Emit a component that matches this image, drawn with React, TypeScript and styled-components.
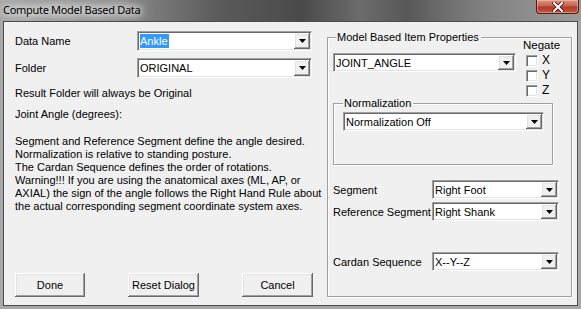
import React from "react";
import styled, { createGlobalStyle } from "styled-components";

const GlobalStyle = createGlobalStyle`
	html, body {
		margin: 0;
		padding: 0;
		background: #ffffff;
	}
	body {
		font-family: "Liberation Sans", Arial, sans-serif;
		font-size: 11px;
		color: #000;
	}
	* {
		box-sizing: border-box;
	}
`;

const raised = `
	background: #f0f0f0;
	box-shadow: inset -1px -1px 0 #696969, inset 1px 1px 0 #ffffff,
		inset -2px -2px 0 #a0a0a0, inset 2px 2px 0 #e3e3e3;
`;

const Window = styled.div`
	width: 581px;
	height: 309px;
	display: flex;
	flex-direction: column;
	background: linear-gradient(90deg, #a4a4a4 0%, #8c8c8c 20%, #5a5a5a 38%, #4a4a4a 52%, #6c6c6c 62%, #585858 70%, #7e7e7e 82%, #9c9c9c 100%);
`;

const TitleBar = styled.div`
	height: 21px;
	display: flex;
	align-items: flex-start;
	justify-content: space-between;
	padding: 0 3px 0 3px;
`;

const TitleText = styled.span`
	font-family: "Noto Sans", "Open Sans", sans-serif;
	font-size: 11px;
	letter-spacing: -0.3px;
	line-height: 19px;
	color: #000;
	text-shadow: 0 0 6px #fff, 0 0 10px #fff, 0 0 14px #fff, 0 0 18px #ddd;
`;

const CloseButton = styled.div`
	width: 43px;
	height: 14px;
	margin-right: -1px;
	border: 1px solid #4a1e18;
	border-top: none;
	border-radius: 0 0 4px 4px;
	background: linear-gradient(180deg, #dd9484 0%, #c9604e 45%, #b23a26 55%, #c4553f 100%);
	box-shadow: inset 0 0 0 1px rgba(255, 210, 200, 0.45);
	display: flex;
	align-items: center;
	justify-content: center;
`;

const Frame = styled.div`
	flex: 1;
	display: flex;
	padding: 0 3px 3px 3px;
	background: #a8a8a8;
`;

const Client = styled.div`
	flex: 1;
	display: flex;
	gap: 14px;
	border: 1px solid #4c4c4c;
	background: #f0f0f0;
	padding: 9px 5px 8px 11px;
`;

const LeftColumn = styled.div`
	width: 298px;
	display: flex;
	flex-direction: column;
`;

const FieldRow = styled.div<{ $gap?: number; $label?: number }>`
	display: flex;
	align-items: center;
	margin-top: ${p => p.$gap ?? 0}px;

	& > span:first-child {
		width: ${p => p.$label ?? 122}px;
		flex: none;
		white-space: nowrap;
	}
`;

const Note = styled.div<{ $gap: number }>`
	margin-top: ${p => p.$gap}px;
	line-height: 13px;
	white-space: nowrap;
`;

const Combo = styled.div<{ $w: number; $h?: number; $gap?: number }>`
	width: ${p => p.$w}px;
	height: ${p => p.$h ?? 19}px;
	margin-top: ${p => p.$gap ?? 0}px;
	flex: none;
	display: flex;
	padding: 1px;
	background: #fff;
	border: 1px solid;
	border-color: #a0a0a0 #ffffff #ffffff #a0a0a0;
	box-shadow: inset 1px 1px 0 #696969, inset -1px -1px 0 #e3e3e3;
`;

const ComboText = styled.div`
	flex: 1;
	display: flex;
	align-items: center;
	padding-left: 1px;
	white-space: nowrap;
	overflow: hidden;
`;

const Selected = styled.span`
	background: #3399ff;
	color: #fff;
	line-height: 14px;
	padding: 0 1px 0 0;
`;

const ArrowButton = styled.div`
	width: 16px;
	flex: none;
	display: flex;
	align-items: center;
	justify-content: center;
	${raised}
`;

const ButtonRow = styled.div`
	margin-top: auto;
	display: flex;
	justify-content: space-between;
`;

const PushButton = styled.button<{ $w: number }>`
	width: ${p => p.$w}px;
	height: 24px;
	border: none;
	padding: 0;
	font: inherit;
	color: #000;
	${raised}
`;

const GroupBox = styled.div<{ $w?: number; $h?: number; $gap: number; $pad: number }>`
	${p => (p.$w ? `width: ${p.$w}px;` : "flex: 1;")}
	${p => (p.$h ? `height: ${p.$h}px;` : "")}
	margin-top: ${p => p.$gap}px;
	border: 1px solid #a0a0a0;
	box-shadow: inset 1px 1px 0 #fff, 1px 1px 0 #fff;
	padding: 0 ${p => p.$pad}px;
	display: flex;
	flex-direction: column;
`;

const Caption = styled.div<{ $indent: number }>`
	width: fit-content;
	margin: -7px 0 0 ${p => p.$indent}px;
	padding: 0 2px 0 1px;
	line-height: 13px;
	background: #f0f0f0;
	white-space: nowrap;
`;

const TopRow = styled.div`
	display: flex;
	align-items: flex-start;
`;

const LeftStack = styled.div`
	display: flex;
	flex-direction: column;
`;

const NegateStack = styled.div`
	margin-left: 7px;
	padding-top: 1px;
	display: flex;
	flex-direction: column;
	gap: 2px;
	line-height: 13px;
	font-size: 11.5px;
`;

const CheckRow = styled.label`
	display: flex;
	align-items: center;
	height: 13px;
	padding-left: 3px;
	gap: 4px;
	font-size: 12px;
`;

const CheckBox = styled.span`
	width: 12px;
	height: 12px;
	background: #fff;
	border: 1px solid;
	border-color: #a0a0a0 #ffffff #ffffff #a0a0a0;
	box-shadow: inset 1px 1px 0 #696969, inset -1px -1px 0 #e3e3e3;
`;

const DownArrow = () => (
	<svg width="7" height="4" viewBox="0 0 7 4">
		<polygon points="0,0 7,0 3.5,4" fill="#000" />
	</svg>
);

const ComboBox: React.FC<{ w: number; h?: number; gap?: number; children: React.ReactNode }> = ({ w, h, gap, children }) => (
	<Combo $w={w} $h={h} $gap={gap}>
		<ComboText>{children}</ComboText>
		<ArrowButton>
			<DownArrow />
		</ArrowButton>
	</Combo>
);

const App: React.FC = () => {
	return (
		<>
			<GlobalStyle />
			<Window>
				<TitleBar>
					<TitleText>Compute Model Based Data</TitleText>
					<CloseButton>
						<svg width="12" height="10" viewBox="0 0 12 10">
							<path d="M2 1 L10 9 M10 1 L2 9" stroke="#3a1410" strokeWidth="3.6" strokeLinecap="square" />
							<path d="M2 1 L10 9 M10 1 L2 9" stroke="#fff" strokeWidth="2" strokeLinecap="square" />
						</svg>
					</CloseButton>
				</TitleBar>
				<Frame>
					<Client>
						<LeftColumn>
							<FieldRow>
								<span>Data Name</span>
								<ComboBox w={175} h={20}>
									<Selected>Ankle</Selected>
								</ComboBox>
							</FieldRow>
							<FieldRow $gap={7}>
								<span>Folder</span>
								<ComboBox w={175} h={20}>ORIGINAL</ComboBox>
							</FieldRow>
							<Note $gap={9}>Result Folder will always be Original</Note>
							<Note $gap={8}>Joint Angle (degrees):</Note>
							<Note $gap={14}>
								Segment and Reference Segment define the angle desired.
								<br />
								Normalization is relative to standing posture.
								<br />
								The Cardan Sequence defines the order of rotations.
								<br />
								Warning!!! If you are using the anatomical axes (ML, AP, or
								<br />
								AXIAL) the sign of the angle follows the Right Hand Rule about
								<br />
								the actual corresponding segment coordinate system axes.
							</Note>
							<ButtonRow>
								<PushButton $w={70}>Done</PushButton>
								<PushButton $w={71}>Reset Dialog</PushButton>
								<PushButton $w={71}>Cancel</PushButton>
							</ButtonRow>
						</LeftColumn>

						<GroupBox $gap={6} $pad={5}>
							<TopRow>
								<LeftStack>
									<Caption $indent={3}>Model Based Item Properties</Caption>
									<ComboBox w={183} gap={9}>JOINT_ANGLE</ComboBox>
								</LeftStack>
								<NegateStack>
									<span>Negate</span>
									<CheckRow>
										<CheckBox />X
									</CheckRow>
									<CheckRow>
										<CheckBox />Y
									</CheckRow>
									<CheckRow>
										<CheckBox />Z
									</CheckRow>
								</NegateStack>
							</TopRow>

							<GroupBox $w={220} $h={62} $gap={6} $pad={9}>
								<Caption $indent={0}>Normalization</Caption>
								<ComboBox w={201} gap={2}>Normalization Off</ComboBox>
							</GroupBox>

							<FieldRow $gap={15} $label={99}>
								<span>Segment</span>
								<ComboBox w={127}>Right Foot</ComboBox>
							</FieldRow>
							<FieldRow $gap={3} $label={99}>
								<span>Reference Segment</span>
								<ComboBox w={127}>Right Shank</ComboBox>
							</FieldRow>
							<FieldRow $gap={31} $label={99}>
								<span>Cardan Sequence</span>
								<ComboBox w={127}>X--Y--Z</ComboBox>
							</FieldRow>
						</GroupBox>
					</Client>
				</Frame>
			</Window>
		</>
	);
};

export default App;
